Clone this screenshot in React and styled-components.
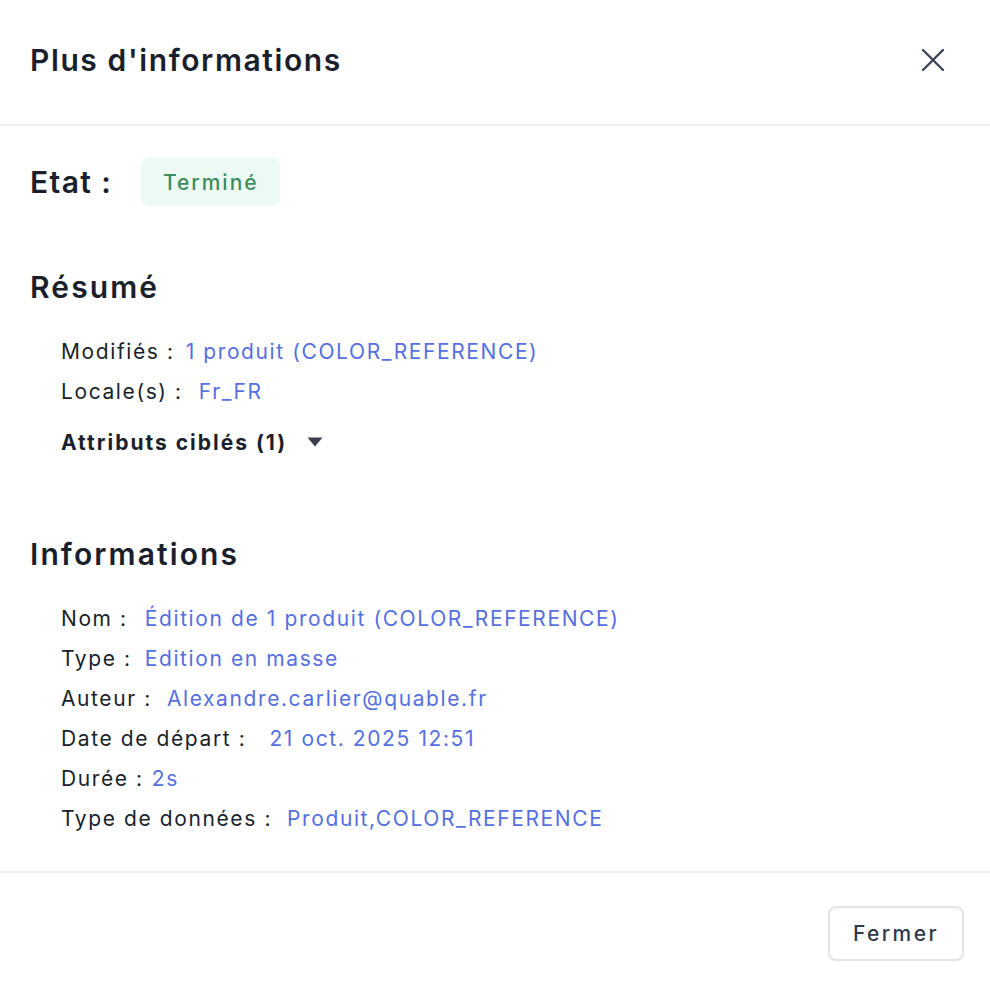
import React from "react";
import styled, { createGlobalStyle } from "styled-components";

const Global = createGlobalStyle`
  html, body { margin: 0; padding: 0; background: #ffffff; }
  body { font-family: Inter, "Noto Sans", sans-serif; color: #1b1f2c; }
  * { box-sizing: border-box; }
`;

const Modal = styled.div`
  width: 990px;
  height: 992px;
  display: flex;
  flex-direction: column;
  background: #fff;
`;

const Header = styled.header`
  height: 126px;
  padding: 0 30px 4px;
  display: flex;
  align-items: center;
  justify-content: space-between;
  border-bottom: 2px solid #f0f0f2;
`;

const Title = styled.h1`
  margin: 0;
  font-size: 30px;
  font-weight: 600;
  color: #1b1f2c;
  letter-spacing: 1.6px;
`;

const CloseButton = styled.button`
  border: none;
  background: none;
  padding: 0;
  margin-right: 14px;
  width: 26px;
  height: 26px;
  display: flex;
  align-items: center;
  justify-content: center;
  color: #3a4558;
  cursor: pointer;
`;

const Body = styled.main`
  flex: 1;
  padding: 32px 30px 0;
  display: flex;
  flex-direction: column;
`;

const StateRow = styled.div`
  display: flex;
  align-items: center;
  gap: 29px;
`;

const StateLabel = styled.span`
  font-size: 30px;
  font-weight: 600;
  letter-spacing: 1.4px;
  color: #1b1f2c;
`;

const Badge = styled.span`
  display: inline-flex;
  align-items: center;
  justify-content: center;
  height: 48px;
  width: 139px;
  border-radius: 8px;
  background: #edfaf3;
  color: #3b8c5e;
  font-size: 21px;
  font-weight: 500;
  letter-spacing: 2px;
`;

const Section = styled.section`
  margin-top: ${(p) => p.$top}px;
`;

const SectionTitle = styled.h2`
  margin: 0 0 ${(p) => p.$gap}px;
  font-size: 30px;
  font-weight: 600;
  letter-spacing: 2.1px;
  color: #1b1f2c;
  line-height: 40px;
`;

const List = styled.div`
  padding-left: 31px;
  display: flex;
  flex-direction: column;
`;

const Row = styled.div`
  display: flex;
  align-items: center;
  height: 40px;
  font-size: 21px;
  letter-spacing: 1.6px;
  white-space: nowrap;
`;

const Label = styled.span`
  color: #1b1f2c;
  margin-right: ${(p) => p.$gap ?? 10}px;
`;

const Value = styled.span`
  color: #5670e0;
`;

const Toggle = styled.button`
  margin-top: 11px;
  border: none;
  background: none;
  padding: 0;
  display: flex;
  align-items: center;
  gap: 20px;
  height: 40px;
  font-family: inherit;
  font-size: 21px;
  font-weight: 700;
  letter-spacing: 2px;
  color: #1b1f2c;
  cursor: pointer;
`;

const Footer = styled.footer`
  height: 121px;
  border-top: 2px solid #f0f0f2;
  display: flex;
  align-items: flex-start;
  justify-content: flex-end;
  padding: 33px 26px 0 0;
`;

const Button = styled.button`
  width: 136px;
  height: 55px;
  border: 2px solid #e3e4ea;
  border-radius: 8px;
  background: #fff;
  font-family: inherit;
  font-size: 21px;
  font-weight: 500;
  letter-spacing: 2.4px;
  color: #2f394b;
  cursor: pointer;
`;

const summary = [
  { label: "Modifiés :", value: "1 produit (COLOR_REFERENCE)", gap: 11 },
  { label: "Locale(s) :", value: "Fr_FR", gap: 16 },
];

const infos = [
  { label: "Nom :", value: "Édition de 1 produit (COLOR_REFERENCE)", gap: 17 },
  { label: "Type :", value: "Edition en masse", gap: 13 },
  { label: "Auteur :", value: "Alexandre.carlier@quable.fr", gap: 15 },
  { label: "Date de départ :", value: "21 oct. 2025 12:51", gap: 23 },
  { label: "Durée :", value: "2s", gap: 8 },
  { label: "Type de données :", value: "Produit,COLOR_REFERENCE", gap: 15 },
];

export default function App() {
  return (
    <>
      <Global />
      <Modal>
        <Header>
          <Title>Plus d'informations</Title>
          <CloseButton aria-label="Fermer">
            <svg width="24" height="24" viewBox="0 0 24 24" fill="none" stroke="currentColor" strokeWidth="2.4" strokeLinecap="round">
              <path d="M2 2L22 22M22 2L2 22" />
            </svg>
          </CloseButton>
        </Header>
        <Body>
          <StateRow>
            <StateLabel>Etat :</StateLabel>
            <Badge>Terminé</Badge>
          </StateRow>
          <Section $top={61}>
            <SectionTitle $gap={24}>Résumé</SectionTitle>
            <List>
              {summary.map((r) => (
                <Row key={r.label}>
                  <Label $gap={r.gap}>{r.label}</Label>
                  <Value>{r.value}</Value>
                </Row>
              ))}
              <Toggle>
                Attributs ciblés (1)
                <svg width="16" height="10" viewBox="0 0 16 10">
                  <path d="M0.5 0.5H15.5L8 9.5Z" fill="#3a4052" />
                </svg>
              </Toggle>
            </List>
          </Section>
          <Section $top={72}>
            <SectionTitle $gap={24}>Informations</SectionTitle>
            <List>
              {infos.map((r) => (
                <Row key={r.label}>
                  <Label $gap={r.gap}>{r.label}</Label>
                  <Value>{r.value}</Value>
                </Row>
              ))}
            </List>
          </Section>
        </Body>
        <Footer>
          <Button>Fermer</Button>
        </Footer>
      </Modal>
    </>
  );
}
